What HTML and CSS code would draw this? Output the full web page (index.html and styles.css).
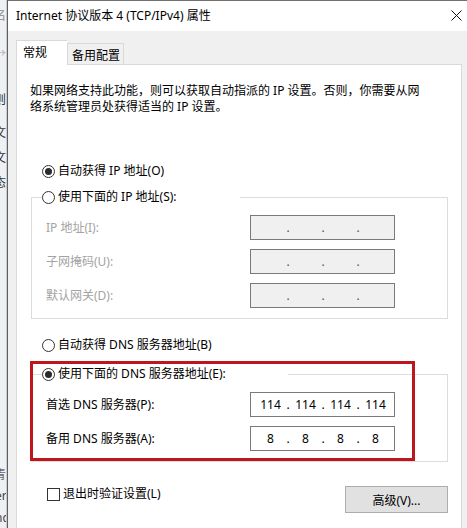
FILE: index.html
```html
<!DOCTYPE html>
<html lang="zh-CN">
<head>
<meta charset="utf-8">
<title>Internet 协议版本 4 (TCP/IPv4) 属性</title>
<link rel="stylesheet" href="styles.css">
</head>
<body>
<div class="screen">
  <div class="bgwin">
    <div class="frag frag-a">名</div>
    <div class="frag frag-b">→</div>
    <div class="frag frag-c">则</div>
    <div class="frag frag-d">文</div>
    <div class="frag frag-e">文</div>
    <div class="frag frag-e">态</div>
    <div class="frag frag-f">青</div>
    <div class="frag frag-g">er</div>
    <div class="frag frag-g">nd</div>
  </div>
  <div class="dialog">
    <div class="titlebar">
      <span class="title">Internet 协议版本 4 (TCP/IPv4) 属性</span>
      <svg class="close" width="11" height="11" viewBox="0 0 11 11"><path d="M0.5 0.5 L10.5 10.5 M10.5 0.5 L0.5 10.5" stroke="#111" stroke-width="1" fill="none"/></svg>
    </div>
    <div class="dlgbody">
      <div class="tabs">
        <div class="tab active">常规</div>
        <div class="tab">备用配置</div>
      </div>
      <div class="panel">
        <p class="desc">如果网络支持此功能，则可以获取自动指派的 IP 设置。否则，你需要从网络系统管理员处获得适当的 IP 设置。</p>

        <div class="opt opt-first"><span class="radio checked"></span><span>自动获得 IP 地址(O)</span></div>

        <fieldset class="group group-ip">
          <legend class="legend legend-ip"><span class="radio"></span><span>使用下面的 IP 地址(S):</span></legend>
          <div class="field disabled"><span class="lbl">IP 地址(I):</span>
            <div class="ipbox off"><span class="seg"></span><span class="dot">.</span><span class="seg"></span><span class="dot">.</span><span class="seg"></span><span class="dot">.</span><span class="seg"></span></div>
          </div>
          <div class="field disabled"><span class="lbl">子网掩码(U):</span>
            <div class="ipbox off"><span class="seg"></span><span class="dot">.</span><span class="seg"></span><span class="dot">.</span><span class="seg"></span><span class="dot">.</span><span class="seg"></span></div>
          </div>
          <div class="field disabled"><span class="lbl">默认网关(D):</span>
            <div class="ipbox off"><span class="seg"></span><span class="dot">.</span><span class="seg"></span><span class="dot">.</span><span class="seg"></span><span class="dot">.</span><span class="seg"></span></div>
          </div>
        </fieldset>

        <div class="opt opt-dns"><span class="radio"></span><span>自动获得 DNS 服务器地址(B)</span></div>

        <fieldset class="group group-dns">
          <legend class="legend legend-dns"><span class="radio checked"></span><span>使用下面的 DNS 服务器地址(E):</span></legend>
          <div class="field"><span class="lbl">首选 DNS 服务器(P):</span>
            <div class="ipbox"><span class="seg">114</span><span class="dot">.</span><span class="seg">114</span><span class="dot">.</span><span class="seg">114</span><span class="dot">.</span><span class="seg">114</span></div>
          </div>
          <div class="field"><span class="lbl">备用 DNS 服务器(A):</span>
            <div class="ipbox"><span class="seg">8</span><span class="dot">.</span><span class="seg">8</span><span class="dot">.</span><span class="seg">8</span><span class="dot">.</span><span class="seg">8</span></div>
          </div>
        </fieldset>

        <div class="footer">
          <div class="check"><span class="box"></span><span>退出时验证设置(L)</span></div>
          <button class="btn" type="button">高级(V)...</button>
        </div>
      </div>
    </div>
  </div>
  <div class="annot"></div>
</div>
</body>
</html>
```

FILE: styles.css
```css
* { box-sizing: border-box; }
html, body { margin: 0; padding: 0; }
body {
  font-family: "Noto Sans", "Noto Sans CJK SC", sans-serif;
  font-size: 12px;
  color: #000;
  background: #f0f0f0;
}
.screen {
  position: relative;
  display: flex;
  width: 467px;
  height: 528px;
  overflow: hidden;
}

/* background window fragment */
.bgwin {
  width: 7px;
  flex: none;
  background: #eef0f3;
  overflow: hidden;
  border-right: 1px solid #c9ccd1;
}
.frag {
  height: 16px;
  line-height: 16px;
  font-family: "Noto Sans CJK SC", sans-serif;
  margin-left: -6px;
  white-space: nowrap;
  color: #333;
}
.frag-a { margin-top: 7px; color: #8a8a8a; }
.frag-b { margin-top: 22px; color: #b5b5b5; }
.frag-c { margin-top: 30px; }
.frag-d { margin-top: 17px; }
.frag-e { margin-top: 9px; }
.frag-f { margin-top: 276px; color: #666; }
.frag-g { margin-top: 6px; margin-left: -5px; font-family: "Noto Sans", sans-serif; color: #444; }

/* dialog */
.dialog {
  flex: 1;
  min-height: 0;
  display: flex;
  flex-direction: column;
  border-top: 1px solid #707070;
  border-left: 1px solid #5f5f5f;
  background: #f0f0f0;
}
.titlebar {
  flex: none;
  height: 30px;
  background: #fff;
  display: flex;
  align-items: center;
  justify-content: space-between;
  padding: 0 5px 1px 8px;
}
.title { line-height: 16px; white-space: nowrap; }
.close { display: block; }

.dlgbody {
  padding: 9px 0 0 8px;
  flex: 1;
  min-height: 0;
  overflow: hidden;
}
.tabs {
  display: flex;
  align-items: flex-end;
  height: 24px;
  position: relative;
  z-index: 1;
}
.tab {
  height: 21px;
  width: 57px;
  border: 1px solid #d9d9d9;
  border-bottom: none;
  background: #f0f0f0;
  padding-left: 4px;
  line-height: 22px;
  font-family: "Noto Sans CJK SC", sans-serif;
}
.tab.active {
  width: 51px;
  height: 26px;
  background: #fff;
  border-right: none;
  padding-left: 6px;
  line-height: 22px;
  margin-bottom: -2px;
}
.panel {
  width: 446px;
  height: 480px;
  background: #fff;
  border: 1px solid #d9d9d9;
  padding: 0 13px 0 14px;
}
.desc {
  margin: 18px 0 0 -1px;
  width: 395px;
  line-height: 16px;
}

/* radios / options */
.opt, .legend {
  display: flex;
  align-items: center;
  gap: 3px;
  height: 18px;
  line-height: 18px;
  white-space: nowrap;
}
.opt { padding-left: 11px; }
.opt-first { margin-top: 47px; }
.opt-dns { margin-top: 17px; }
.radio {
  width: 13px;
  height: 13px;
  flex: none;
  border-radius: 50%;
  border: 1px solid #333;
  background: #fff;
  display: flex;
  align-items: center;
  justify-content: center;
}
.radio.checked::after {
  content: "";
  width: 7px;
  height: 7px;
  border-radius: 50%;
  background: #2b2b2b;
}

/* group boxes */
.group {
  margin: 0;
  border: 1px solid #dcdcdc;
  padding: 9px 0 10px 14px;
  min-width: 0;
}
.group-ip { margin-top: 8px; }
.group-dns { margin-top: 11px; }
.legend {
  padding: 0;
  margin-left: -4px;
  background: #fff;
}
.legend-ip { width: 198px; }
.legend-dns { width: 246px; }

.field {
  display: flex;
  align-items: center;
  height: 25px;
}
.field + .field { margin-top: 9px; }
.lbl {
  width: 204px;
  flex: none;
  line-height: 18px;
  white-space: nowrap;
}
.field.disabled .lbl { color: #a3a3a3; }

.ipbox {
  width: 145px;
  height: 25px;
  border: 1px solid #7a7a7a;
  background: #fff;
  display: flex;
  align-items: center;
  padding-left: 4px;
  line-height: 18px;
}
.ipbox.off { background: #f0f0f0; }
.seg { width: 31px; text-align: center; }
.dot { width: 4px; text-align: center; }
.ipbox.off .dot { color: #555; }

/* footer */
.footer {
  margin-top: 23px;
  display: flex;
  justify-content: space-between;
  align-items: flex-start;
  padding-left: 16px;
}
.check {
  display: flex;
  align-items: center;
  gap: 3px;
  height: 18px;
  line-height: 18px;
}
.box {
  width: 13px;
  height: 13px;
  border: 1px solid #333;
  background: #fff;
}
.btn {
  margin-top: 1px;
  width: 103px;
  height: 27px;
  background: #e1e1e1;
  border: 1px solid #adadad;
  font-family: "Noto Sans", "Noto Sans CJK SC", sans-serif;
  font-size: 12px;
  color: #000;
  padding: 0;
}

/* red annotation overlay */
.annot {
  position: absolute;
  left: 30px;
  top: 361px;
  width: 385px;
  height: 100px;
  border: 3px solid #bf161d;
  pointer-events: none;
}
```
